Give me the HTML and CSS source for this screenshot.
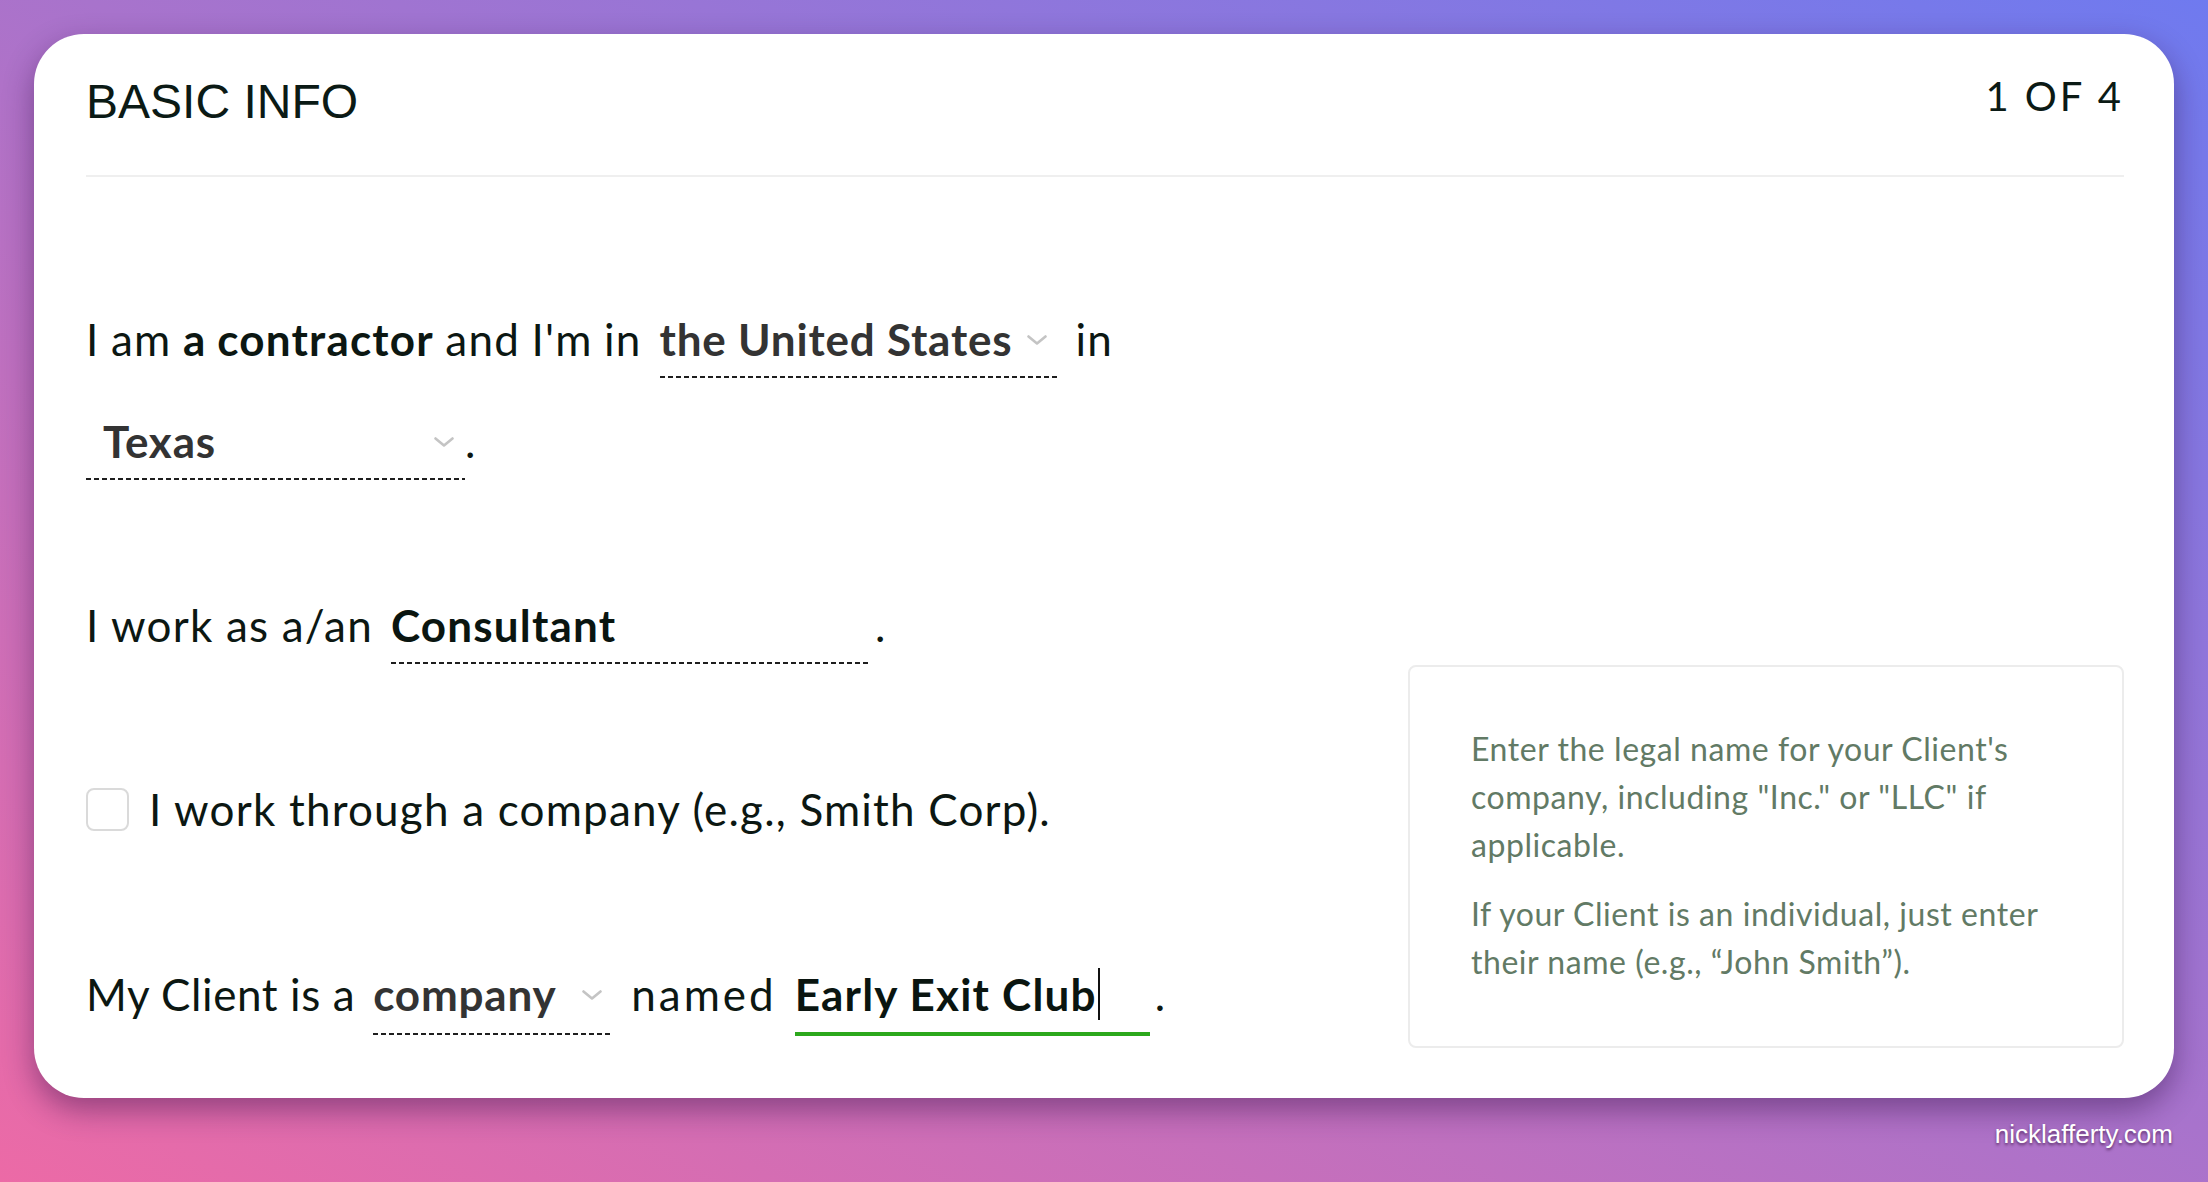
FILE: index.html
```html
<!DOCTYPE html>
<html lang="en">
<head>
<meta charset="utf-8">
<title>Basic Info</title>
<link rel="stylesheet" href="styles.css">
</head>
<body>
<main class="card">
  <header class="card-header">
    <h1 class="title">BASIC INFO</h1>
    <div class="step">1 OF 4</div>
  </header>
  <section class="card-body">
    <div class="form-col">
      <div class="row row-wrap">
        <span class="txt tight">I am <strong class="strong">a contractor</strong> and I'm in</span>
        <span class="field select w-country">
          <span class="val">the United States</span>
          <svg class="chev" viewBox="0 0 20 10"><path d="M1.5 1.5 L10 8.5 L18.5 1.5"/></svg>
        </span>
        <span class="txt">in</span>
        <span class="field select w-state">
          <span class="val">Texas</span>
          <svg class="chev" viewBox="0 0 20 10"><path d="M1.5 1.5 L10 8.5 L18.5 1.5"/></svg>
        </span>
        <span class="txt dot dot-tight">.</span>
      </div>

      <div class="row">
        <span class="txt">I work as a/an</span>
        <span class="field input w-role"><span class="val">Consultant</span></span>
        <span class="txt dot">.</span>
      </div>

      <div class="row row-check">
        <span class="checkbox"></span>
        <span class="txt">I work through a company (e.g., Smith Corp).</span>
      </div>

      <div class="row row-last">
        <span class="txt narrow">My Client is a</span>
        <span class="field select w-client">
          <span class="val">company</span>
          <svg class="chev" viewBox="0 0 20 10"><path d="M1.5 1.5 L10 8.5 L18.5 1.5"/></svg>
        </span>
        <span class="txt wide">named</span>
        <span class="field input active w-name"><span class="val">Early Exit Club<span class="caret"></span></span></span>
        <span class="txt dot">.</span>
      </div>
    </div>

    <aside class="help">
      <p>Enter the legal name for your Client's company, including "Inc." or "LLC" if applicable.</p>
      <p>If your Client is an individual, just enter their name (e.g., “John Smith”).</p>
    </aside>
  </section>
</main>
<div class="credit">nicklafferty.com</div>
</body>
</html>
```

FILE: styles.css
```css
* {
  box-sizing: border-box;
}

html,
body {
  margin: 0;
  height: 100%;
}

body {
  padding: 34px 34px 0;
  overflow: hidden;
  background: linear-gradient(to top right, #ec6aa6 0%, #a873cc 52%, #6f7aef 100%);
  font-family: Lato, "Noto Sans", sans-serif;
  color: #0c1712;
}

.card {
  background: #ffffff;
  border-radius: 50px;
  padding: 45px 50px 50px 52px;
  box-shadow: 0 12px 30px rgba(50, 15, 70, 0.45);
}

.card-header {
  display: flex;
  justify-content: space-between;
  align-items: flex-start;
  padding-bottom: 50px;
  border-bottom: 2px solid #efefef;
}

.title {
  margin: -1px 0 0;
  font-family: "Liberation Sans", Arial, sans-serif;
  font-size: 48px;
  font-weight: 400;
  line-height: 47px;
  color: #0b1a15;
}

.step {
  margin-top: -3px;
  font-family: Lato, sans-serif;
  font-size: 40px;
  line-height: 1;
  letter-spacing: 3px;
  color: #0b1a15;
}

.card-body {
  display: flex;
  align-items: flex-end;
  padding-top: 136px;
}

.form-col {
  flex: 1;
  display: flex;
  flex-direction: column;
  gap: 119px;
  padding-bottom: 12px;
}

.row {
  display: flex;
  align-items: baseline;
  column-gap: 18px;
  font-size: 44px;
  line-height: 52px;
  letter-spacing: 1.2px;
  white-space: nowrap;
}

.row-wrap {
  flex-wrap: wrap;
  row-gap: 37px;
}

.tight {
  word-spacing: -1px;
}

.narrow {
  letter-spacing: 0.6px;
}

.wide {
  letter-spacing: 3px;
}

.strong {
  font-weight: 700;
}

.field {
  display: flex;
  align-items: baseline;
  height: 65px;
  padding-bottom: 13px;
  font-weight: 700;
  background: linear-gradient(to right, #1e1e1e 5px, transparent 5px) left bottom / 8px 2px repeat-x;
}

.field.select {
  justify-content: space-between;
  padding-right: 11px;
  color: #333333;
  letter-spacing: 0.8px;
}

.field.input {
  color: #0a1510;
}

.row-last .field {
  height: 67px;
  padding-bottom: 15px;
}

.row-last .field.active {
  height: 68px;
  background: linear-gradient(#2ca81c, #2ca81c) left bottom / 100% 4px no-repeat;
}

.val {
  line-height: 52px;
}

.chev {
  align-self: flex-start;
  margin-top: 22px;
  width: 20px;
  height: 10px;
  fill: none;
  stroke: #c4c4c4;
  stroke-width: 2.6;
  stroke-linecap: round;
  stroke-linejoin: round;
}

.w-country {
  width: 398px;
}

.w-state {
  width: 379px;
  padding-left: 17px;
}

.w-role {
  width: 479px;
}

.w-client {
  width: 240px;
}

.w-name {
  width: 355px;
}

.caret {
  display: inline-block;
  width: 2px;
  height: 52px;
  margin-left: 1px;
  vertical-align: top;
  background: #111111;
}

.dot {
  margin-left: -13px;
}

.dot-tight {
  margin-left: -18px;
}

.row-check {
  align-items: center;
  column-gap: 20px;
  margin-bottom: 14px;
}

.checkbox {
  flex: none;
  width: 43px;
  height: 43px;
  border: 2px solid #dadada;
  border-radius: 8px;
}

.help {
  flex: none;
  width: 716px;
  padding: 58px 61px 60px;
  border: 2px solid #ececec;
  border-radius: 8px;
  font-size: 32px;
  line-height: 48px;
  letter-spacing: 0.55px;
  color: #627a65;
}

.help p {
  margin: 0;
}

.help p + p {
  margin-top: 21px;
}

.credit {
  margin: 23px 1px 0 0;
  text-align: right;
  font-family: "Liberation Sans", Arial, sans-serif;
  font-size: 26px;
  line-height: 1;
  color: #ffffff;
  text-shadow: 0 2px 3px rgba(40, 0, 40, 0.6);
}
```
